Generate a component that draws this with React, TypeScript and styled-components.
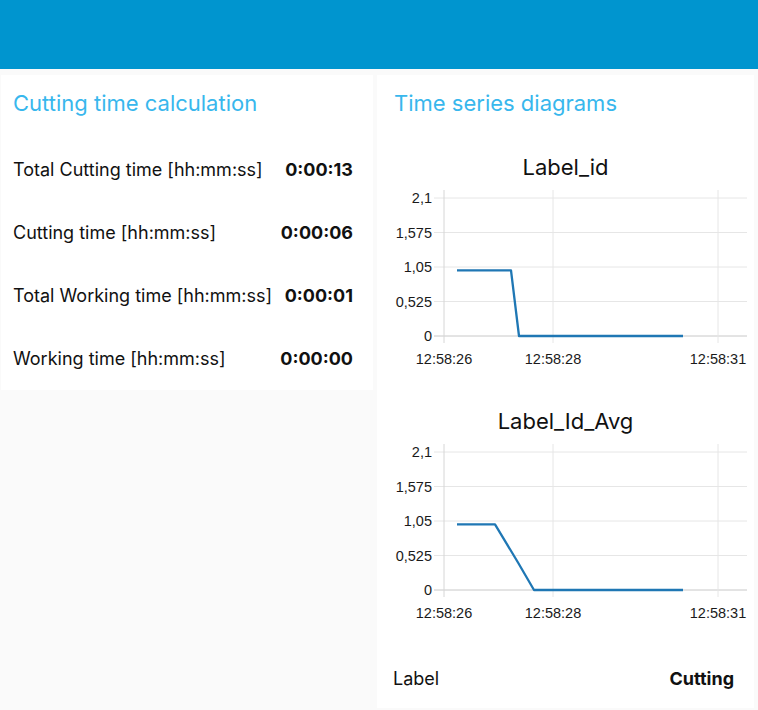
import React from "react";
import styled, { createGlobalStyle } from "styled-components";

const Global = createGlobalStyle`
  html, body { margin: 0; padding: 0; background: #fafafa; }
  body { font-family: Inter, "Liberation Sans", Arial, sans-serif; color: #111; }
`;

const Page = styled.div`
  width: 758px;
  min-height: 710px;
  background: #fafafa;
`;

const Header = styled.header`
  height: 69px;
  background: #0095cf;
`;

const Content = styled.main`
  display: flex;
  align-items: flex-start;
  gap: 4px;
  padding: 6px 4px 2px 1px;
`;

const Card = styled.section<{ $w: number }>`
  width: ${(p) => p.$w}px;
  background: #ffffff;
  box-sizing: border-box;
  display: flex;
  flex-direction: column;
  padding-bottom: ${(p) => (p.$w > 375 ? 5 : 0)}px;
`;

const CardTitle = styled.h2<{ $pl: number }>`
  margin: 8px 0 0 0;
  padding-left: ${(p) => p.$pl}px;
  height: 40px;
  line-height: 40px;
  font-size: 22px;
  font-weight: 400;
  color: #38b7ed;
  white-space: nowrap;
`;

const Rows = styled.div`
  margin-top: 15px;
  display: flex;
  flex-direction: column;
`;

const Row = styled.div`
  height: 63px;
  display: flex;
  align-items: center;
  justify-content: space-between;
  padding: 0 20px 0 12px;
  font-size: 18px;
  white-space: nowrap;
`;

const Label = styled.span`
  font-weight: 400;
  color: #111;
`;

const Value = styled.span`
  font-weight: 700;
  color: #111;
`;

const ChartBlock = styled.div<{ $mt: number }>`
  margin-top: ${(p) => p.$mt}px;
  display: flex;
  flex-direction: column;
`;

const ChartTitle = styled.div`
  height: 30px;
  line-height: 30px;
  text-align: center;
  font-size: 22px;
  color: #111;
  white-space: nowrap;
`;

const ChartSvg = styled.svg`
  display: block;
  font-family: "Liberation Sans", Arial, sans-serif;
  font-size: 14.5px;
`;

const BottomRow = styled.div`
  margin-top: 17px;
  height: 50px;
  display: flex;
  align-items: center;
  justify-content: space-between;
  padding: 0 20px 0 16px;
  font-size: 18px;
`;

const rows = [
  ["Total Cutting time [hh:mm:ss]", "0:00:13"],
  ["Cutting time [hh:mm:ss]", "0:00:06"],
  ["Total Working time [hh:mm:ss]", "0:00:01"],
  ["Working time [hh:mm:ss]", "0:00:00"],
];

const yTicks = ["2,1", "1,575", "1,05", "0,525", "0"];
const xTicks: [number, string][] = [
  [67, "12:58:26"],
  [176, "12:58:28"],
  [341, "12:58:31"],
];

function Chart({ title, points, mt }: { title: string; points: string; mt: number }) {
  const top = 16;
  const bottom = 154;
  const step = (bottom - top) / 4;
  return (
    <ChartBlock $mt={mt}>
      <ChartTitle>{title}</ChartTitle>
      <ChartSvg width={377} height={200} viewBox="0 0 377 200">
        {yTicks.map((t, i) => {
          const y = top + i * step;
          return (
            <g key={t}>
              <line
                x1={57}
                x2={370}
                y1={y}
                y2={y}
                stroke={i === 4 ? "#c8c8c8" : "#e6e6e6"}
                strokeWidth={1}
              />
              <text x={55} y={y} textAnchor="end" dominantBaseline="central" fill="#1a1a1a">
                {t}
              </text>
            </g>
          );
        })}
        {xTicks.map(([x, t]) => (
          <g key={t}>
            <line x1={x} x2={x} y1={8} y2={161} stroke={x === 67 ? "#d6d6d6" : "#e6e6e6"} strokeWidth={1} />
            <text x={x} y={177} textAnchor="middle" dominantBaseline="central" fill="#1a1a1a">
              {t}
            </text>
          </g>
        ))}
        <polyline
          points={points}
          fill="none"
          stroke="#1f77b4"
          strokeWidth={2.3}
          strokeLinejoin="round"
        />
      </ChartSvg>
    </ChartBlock>
  );
}

export default function App() {
  return (
    <Page>
      <Global />
      <Header />
      <Content>
        <Card $w={373}>
          <CardTitle $pl={12}>Cutting time calculation</CardTitle>
          <Rows>
            {rows.map(([l, v]) => (
              <Row key={l}>
                <Label>{l}</Label>
                <Value>{v}</Value>
              </Row>
            ))}
          </Rows>
        </Card>
        <Card $w={377}>
          <CardTitle $pl={17}>Time series diagrams</CardTitle>
          <Chart title="Label_id" mt={29} points="80,88.3 134,88.3 142,154 306,154" />
          <Chart title="Label_Id_Avg" mt={24} points="80,88.3 118,88.3 141,126.5 157,154 306,154" />
          <BottomRow>
            <Label>Label</Label>
            <Value>Cutting</Value>
          </BottomRow>
        </Card>
      </Content>
    </Page>
  );
}
